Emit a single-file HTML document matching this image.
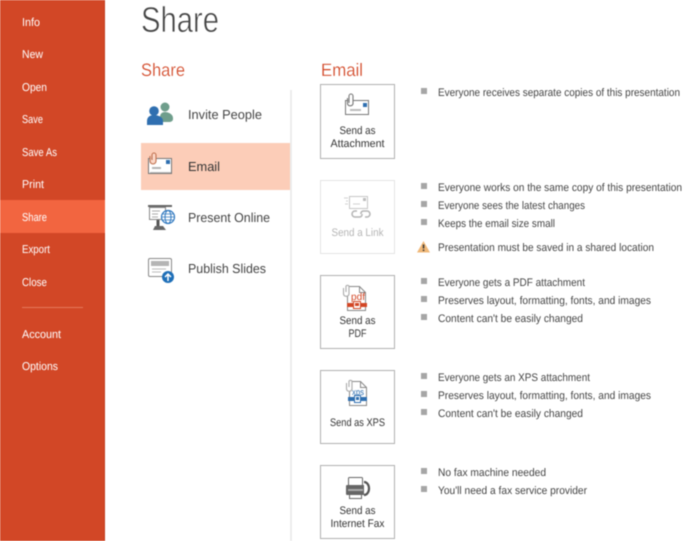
<!DOCTYPE html>
<html><head><meta charset="utf-8"><style>
html,body{margin:0;padding:0;background:#fff;width:700px;height:541px;overflow:hidden}
svg{display:block;filter:blur(.4px)}
text{font-family:"Liberation Sans",sans-serif;text-rendering:geometricPrecision}
.n{font-size:11.500px;fill:#fff}
.l{font-size:13px;fill:#444}
.t{font-size:11px;fill:#444}
.lb{font-size:11px;fill:#333}
.bl{fill:#a6a6a6}
.btn{fill:#fff;stroke:#b0b0b0}
</style></head><body>
<svg width="700" height="541" viewBox="0 0 700 541" xmlns="http://www.w3.org/2000/svg">
<rect x="0" y="0" width="105" height="541" fill="#D24726"/>
<rect x="104" y="0" width="1" height="541" fill="#c33f20"/>
<rect x="0" y="200" width="105" height="33" fill="#F26540"/>
<rect x="22" y="307" width="61" height="1" fill="#e5795c"/>
<text class="n" x="22" y="26" textLength="18" lengthAdjust="spacingAndGlyphs">Info</text>
<text class="n" x="22" y="58" textLength="21" lengthAdjust="spacingAndGlyphs">New</text>
<text class="n" x="22" y="91" textLength="25" lengthAdjust="spacingAndGlyphs">Open</text>
<text class="n" x="22" y="123" textLength="21" lengthAdjust="spacingAndGlyphs">Save</text>
<text class="n" x="22" y="156" textLength="35" lengthAdjust="spacingAndGlyphs">Save As</text>
<text class="n" x="22" y="188" textLength="22" lengthAdjust="spacingAndGlyphs">Print</text>
<text class="n" x="22" y="221" textLength="25" lengthAdjust="spacingAndGlyphs">Share</text>
<text class="n" x="22" y="253" textLength="28" lengthAdjust="spacingAndGlyphs">Export</text>
<text class="n" x="22" y="286" textLength="25" lengthAdjust="spacingAndGlyphs">Close</text>
<text class="n" x="22" y="338" textLength="39" lengthAdjust="spacingAndGlyphs">Account</text>
<text class="n" x="22" y="370" textLength="36" lengthAdjust="spacingAndGlyphs">Options</text>

<text x="141" y="32" font-size="36" fill="#444" stroke="#fff" stroke-width=".7" textLength="78" lengthAdjust="spacingAndGlyphs">Share</text>
<text x="141" y="76" font-size="18" fill="#D24726" stroke="#fff" stroke-width=".2" textLength="44" lengthAdjust="spacingAndGlyphs">Share</text>
<text x="321" y="76" font-size="18" fill="#D24726" stroke="#fff" stroke-width=".2" textLength="42" lengthAdjust="spacingAndGlyphs">Email</text>

<rect x="290" y="90" width="2" height="451" fill="#ececec"/>
<rect x="141" y="143" width="149" height="47" fill="#FCCDB8"/>

<text class="l" x="188" y="119" textLength="74" lengthAdjust="spacingAndGlyphs">Invite People</text>
<text class="l" x="188" y="171" textLength="32" lengthAdjust="spacingAndGlyphs" style="fill:#333">Email</text>
<text class="l" x="188" y="222" textLength="82" lengthAdjust="spacingAndGlyphs">Present Online</text>
<text class="l" x="188" y="273" textLength="78" lengthAdjust="spacingAndGlyphs">Publish Slides</text>

<!-- invite people -->
<circle cx="165" cy="107" r="4.500" fill="#6f9e8c"/>
<path d="M160 122v-5c0-3 2-5 5-5s8 2 8 6v1c0 2-2 3-4 3z" fill="#6f9e8c"/>
<circle cx="154" cy="111" r="4.800" fill="#2f6fb0"/>
<path d="M147 125v-4c0-4 3-6 7-6s9 2 9 6v4z" fill="#2f6fb0"/>
<!-- email icon -->
<g fill="none">
<rect x="148.500" y="158.500" width="23" height="15" fill="#fff" stroke="#777"/>
<rect x="152" y="167" width="9" height="2" fill="#b5b5b5"/>
<rect x="166" y="160" width="4" height="4" fill="#2f6fb0"/>
<rect x="150" y="172" width="21" height="1" fill="#bbb"/>
<path d="M152 160v-5a2 2 0 0 1 4 0v6a3 3 0 0 1-6 0v-5" stroke="#c0714f" stroke-width="1.100" fill="#fcd8c8"/>
</g>
<!-- present -->
<g fill="none">
<rect x="148" y="205" width="24" height="2" fill="#666"/>
<rect x="149.500" y="207.500" width="16" height="12" fill="#fff" stroke="#888"/>
<path d="M152 211h8M152 214h6M152 217h6" stroke="#aaa"/>
<path d="M158 220v6" stroke="#555" stroke-width="3"/>
<path d="M153 230l2-4h8l3 4z" fill="#666"/>
<circle cx="168" cy="217" r="6.500" fill="#fff" stroke="#2f78bf" stroke-width="1.200"/>
<ellipse cx="168" cy="217" rx="3" ry="6.500" stroke="#2f78bf"/>
<path d="M161.500 217h13M162.500 214h11M162.500 220h11" stroke="#2f78bf" stroke-width=".8"/>
</g>
<!-- publish -->
<g fill="none">
<rect x="148.500" y="258.500" width="23" height="18" rx="1.500" fill="#fff" stroke="#888"/>
<rect x="151" y="261" width="18" height="5" fill="#b5b5b5"/>
<path d="M152 269h14M152 272h9" stroke="#bbb"/>
<circle cx="168" cy="277" r="6" fill="#1e6fb8"/>
<path d="M168 281v-7M165 277l3-3 3 3" stroke="#fff" stroke-width="1.500"/>
</g>

<!-- Buttons -->
<rect class="btn" x="320.500" y="84.500" width="74" height="74"/>
<rect x="320.500" y="180.500" width="74" height="73" fill="#fff" stroke="#e4e4e4"/>
<rect class="btn" x="320.500" y="275.500" width="74" height="73"/>
<rect class="btn" x="320.500" y="370.500" width="74" height="73"/>
<rect class="btn" x="320.500" y="465.500" width="74" height="73"/>

<!-- attach icon -->
<g fill="none">
<rect x="345.500" y="100.500" width="23" height="14" fill="#fff" stroke="#777"/>
<rect x="350" y="109" width="11" height="2" fill="#bdbdbd"/>
<rect x="363" y="103" width="4" height="4" fill="#2f6fb0"/>
<path d="M349 103v-7a2 2 0 0 1 4 0v8a3 3 0 0 1-5.500 0v-6" stroke="#777" stroke-width="1.100" fill="#fff"/>
</g>
<text class="lb" x="357.500" y="134" text-anchor="middle" textLength="36" lengthAdjust="spacingAndGlyphs">Send as</text>
<text class="lb" x="357.500" y="147" text-anchor="middle" textLength="54" lengthAdjust="spacingAndGlyphs">Attachment</text>

<!-- link icon -->
<g fill="none" opacity=".55">
<rect x="349.500" y="196.500" width="18" height="12" stroke="#999" fill="#fff"/>
<path d="M353 204h7M344 198h4M346 201h2M345 204h3" stroke="#aaa"/>
<rect x="363" y="198" width="3" height="3" fill="#888"/>
<path d="M357 211h-2a2.500 2.500 0 0 0 0 6h5a2.500 2.500 0 0 0 2-3M361 214a2.500 2.500 0 0 1 2-3h4a2.500 2.500 0 0 1 0 6h-2" stroke="#777" stroke-width="1.500"/>
</g>
<text class="lb" style="fill:#b5b5b5" x="357.500" y="236" text-anchor="middle" textLength="52" lengthAdjust="spacingAndGlyphs">Send a Link</text>

<!-- pdf icon -->
<g fill="none">
<path d="M347.500 286.500h12l6 6v18h-18z" fill="#fff" stroke="#888"/>
<path d="M359.500 286.500v6h6" stroke="#888"/>
<path d="M346 292v-6a2 2 0 0 1 3 0v8a2.800 2.800 0 0 1-5.500 0v-6" stroke="#aaa" stroke-width="1.100" fill="#fff"/>
</g>
<text x="358" y="300" font-size="10" fill="#d24726" text-anchor="middle" textLength="14" lengthAdjust="spacingAndGlyphs">pdf</text>
<rect x="347" y="303" width="20" height="4" fill="#d24726"/>
<rect x="353.500" y="301.500" width="7" height="7" fill="#fff" stroke="#d24726"/>
<rect x="355" y="303" width="4" height="3" fill="#d24726"/>
<text class="lb" x="357.500" y="324" text-anchor="middle" textLength="36" lengthAdjust="spacingAndGlyphs">Send as</text>
<text class="lb" x="357.500" y="337" text-anchor="middle" textLength="18" lengthAdjust="spacingAndGlyphs">PDF</text>

<!-- xps icon -->
<g fill="none">
<path d="M349.500 381.500h11l6 6v18h-17z" fill="#fff" stroke="#888"/>
<path d="M360.500 381.500v6h6" stroke="#888"/>
<path d="M349 387v-6a2 2 0 0 1 3 0v8a2.800 2.800 0 0 1-5.500 0v-6" stroke="#aaa" stroke-width="1.100" fill="#fff"/>
</g>
<text x="358" y="395" font-size="9" fill="#2f6fb0" text-anchor="middle" textLength="12" lengthAdjust="spacingAndGlyphs">xps</text>
<rect x="348" y="397" width="19" height="4" fill="#2f6fb0"/>
<rect x="354.500" y="395.500" width="6" height="7" fill="#fff" stroke="#2f6fb0"/>
<rect x="356" y="397" width="3" height="3" fill="#2f6fb0"/>
<text class="lb" x="357.500" y="426" text-anchor="middle" textLength="55" lengthAdjust="spacingAndGlyphs">Send as XPS</text>

<!-- fax icon -->
<g fill="none">
<rect x="348.500" y="477.500" width="14" height="8" rx="1" fill="#fff" stroke="#666"/>
<path d="M347 485h17v10h-17a1 1 0 0 1-1-1v-8a1 1 0 0 1 1-1z" fill="#666"/>
<rect x="348" y="489" width="15" height="2" fill="#aaa"/>
<rect x="349.500" y="494.500" width="12" height="4" fill="#fff" stroke="#666"/>
<path d="M364 482c3 0 5 3 5 6.500s-2 6.500-5 6.500" stroke="#555" stroke-width="2.200"/>
</g>
<text class="lb" x="357.500" y="514" text-anchor="middle" textLength="36" lengthAdjust="spacingAndGlyphs">Send as</text>
<text class="lb" x="357.500" y="527" text-anchor="middle" textLength="54" lengthAdjust="spacingAndGlyphs">Internet Fax</text>

<!-- bullets -->
<rect class="bl" x="421" y="88" width="6" height="6"/>
<rect class="bl" x="421" y="183" width="6" height="6"/>
<rect class="bl" x="421" y="201" width="6" height="6"/>
<rect class="bl" x="421" y="219" width="6" height="6"/>
<path d="M423.500 241l6.500 11.500h-13z" fill="#f0b878"/>
<rect x="422.800" y="244.500" width="1.500" height="4" fill="#333"/>
<rect x="422.800" y="249.500" width="1.500" height="1.500" fill="#333"/>
<rect class="bl" x="421" y="278" width="6" height="6"/>
<rect class="bl" x="421" y="296" width="6" height="6"/>
<rect class="bl" x="421" y="314" width="6" height="6"/>
<rect class="bl" x="421" y="373" width="6" height="6"/>
<rect class="bl" x="421" y="391" width="6" height="6"/>
<rect class="bl" x="421" y="409" width="6" height="6"/>
<rect class="bl" x="421" y="468" width="6" height="6"/>
<rect class="bl" x="421" y="486" width="6" height="6"/>

<text class="t" x="438" y="96" textLength="242" lengthAdjust="spacingAndGlyphs">Everyone receives separate copies of this presentation</text>
<text class="t" x="438" y="191" textLength="244" lengthAdjust="spacingAndGlyphs">Everyone works on the same copy of this presentation</text>
<text class="t" x="438" y="209" textLength="147" lengthAdjust="spacingAndGlyphs">Everyone sees the latest changes</text>
<text class="t" x="438" y="227" textLength="117" lengthAdjust="spacingAndGlyphs">Keeps the email size small</text>
<text class="t" x="438" y="251" textLength="216" lengthAdjust="spacingAndGlyphs">Presentation must be saved in a shared location</text>
<text class="t" x="438" y="286" textLength="147" lengthAdjust="spacingAndGlyphs">Everyone gets a PDF attachment</text>
<text class="t" x="438" y="304" textLength="213" lengthAdjust="spacingAndGlyphs">Preserves layout, formatting, fonts, and images</text>
<text class="t" x="438" y="322" textLength="145" lengthAdjust="spacingAndGlyphs">Content can't be easily changed</text>
<text class="t" x="438" y="381" textLength="152" lengthAdjust="spacingAndGlyphs">Everyone gets an XPS attachment</text>
<text class="t" x="438" y="399" textLength="213" lengthAdjust="spacingAndGlyphs">Preserves layout, formatting, fonts, and images</text>
<text class="t" x="438" y="417" textLength="145" lengthAdjust="spacingAndGlyphs">Content can't be easily changed</text>
<text class="t" x="438" y="476" textLength="108" lengthAdjust="spacingAndGlyphs">No fax machine needed</text>
<text class="t" x="438" y="494" textLength="149" lengthAdjust="spacingAndGlyphs">You'll need a fax service provider</text>
</svg>
</body></html>
